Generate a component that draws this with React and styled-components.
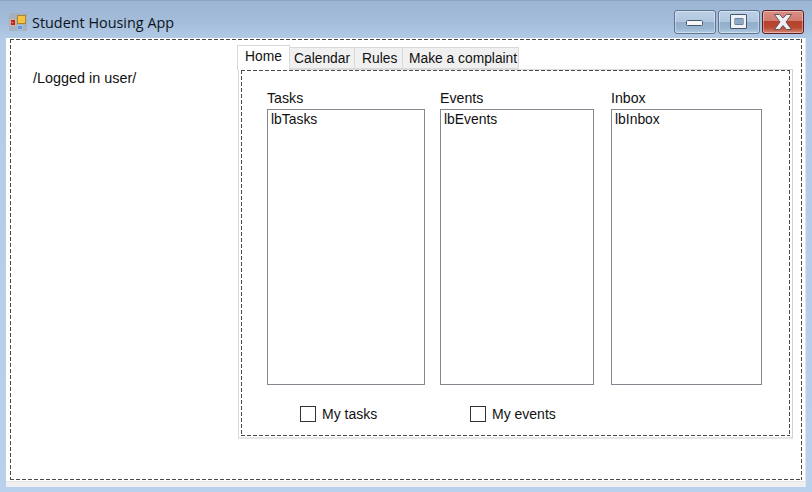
import React from "react";
import styled, { createGlobalStyle, css } from "styled-components";

const Global = createGlobalStyle`
  html, body { margin: 0; padding: 0; }
  body { font-family: "Liberation Sans", Arial, sans-serif; font-size: 14.4px; color: #111; }
  * { box-sizing: border-box; }
`;

const dashed = css`
  background-image:
    linear-gradient(90deg, #4a4a4a 4px, transparent 4px),
    linear-gradient(90deg, #4a4a4a 4px, transparent 4px),
    linear-gradient(180deg, #4a4a4a 4px, transparent 4px),
    linear-gradient(180deg, #4a4a4a 4px, transparent 4px);
  background-size: 6px 1px, 6px 1px, 1px 6px, 1px 6px;
  background-position: 0 0, 0 100%, 0 0, 100% 0;
  background-repeat: repeat-x, repeat-x, repeat-y, repeat-y;
`;

const Win = styled.div`
  width: 812px;
  height: 492px;
  display: flex;
  flex-direction: column;
  overflow: hidden;
  background: linear-gradient(180deg, #9bb5d3 0, #a3bcd9 20px, #b3cbe6 38px, #b9d1ec 100%);
  border-top: 1px solid #8ba4c0;
`;
const TitleBar = styled.header`
  height: 37px;
  flex: none;
  display: flex;
  align-items: flex-start;
  padding: 9px 8px 0 9px;
`;
const AppIcon = styled.svg`
  width: 18px;
  height: 18px;
  margin-top: 3px;
  flex: none;
`;
const Title = styled.h1`
  margin: 3px 0 0 5px;
  font: 400 14.4px/20px "Open Sans", sans-serif;
  color: #0c1420;
  flex: 1;
`;
const WinButtons = styled.div`
  display: flex;
  gap: 2px;
`;
const WinButton = styled.div`
  width: 42px;
  height: 24px;
  border-radius: 3px;
  border: 1px solid ${p => (p.$close ? "#5f1c22" : "#5f7590")};
  box-shadow: inset 0 0 0 1px rgba(255,255,255,.38);
  background: ${p =>
    p.$close
      ? "linear-gradient(180deg,#d98e83 0%,#d17c70 45%,#b5412b 47%,#b84a33 75%,#d58673 100%)"
      : "linear-gradient(180deg,#bcd0e6 0%,#b0c7df 48%,#93aeca 50%,#9ab5d0 80%,#b3cce4 100%)"};
  display: flex;
`;
const Client = styled.main`
  flex: none;
  height: 449px;
  margin: 0 6px;
  border-right: 1px solid #e6e6e6;
  padding: 1px 3px 7px 4px;
  display: flex;
  background: linear-gradient(180deg, #fff 0, #fff 443px, #e4e4e4 443px, #e4e4e4 444px, #f0f0f0 444px);
`;
const Outer = styled.div`
  width: 792px;
  height: 441px;
  padding: 1px;
  ${dashed}
  display: flex;
`;
const UserCol = styled.aside`
  width: 227px;
  flex: none;
  padding: 30px 0 0 22px;
  line-height: 16px;
`;
const TabControl = styled.section`
  width: 555px;
  margin-top: 5px;
  display: flex;
  flex-direction: column;
`;
const TabStrip = styled.nav`
  display: flex;
  align-items: flex-end;
  height: 24px;
  margin-left: -1px;
  position: relative;
  z-index: 1;
`;
const Tab = styled.div`
  height: ${p => (p.$active ? 25 : 22)}px;
  width: ${p => p.$w}px;
  border: 1px solid #d9d9d9;
  border-left-width: ${p => (p.$first ? 1 : 0)}px;
  border-bottom: ${p => (p.$active ? "0" : "1px solid #d9d9d9")};
  background: ${p => (p.$active ? "#fff" : "#f0f0f0")};
  padding: 3px 0 0 ${p => p.$pad}px;
  font-size: 13.8px;
  line-height: 16px;
  white-space: nowrap;
  color: #111;
  ${p => (p.$active ? "margin-bottom:-1px;" : "")}
`;
const Page = styled.div`
  width: 555px;
  height: 370px;
  border: 1px solid #d9d9d9;
  border-right-color: #d0d0d0;
  border-bottom-width: 2px;
  border-bottom-color: #e6e6e6;
  padding: 0 2px 1px;
`;
const PageInner = styled.div`
  width: 549px;
  height: 366px;
  ${dashed}
  padding: 20px 0 0 26px;
  display: flex;
  flex-direction: column;
`;
const Columns = styled.div`
  display: flex;
`;
const Column = styled.div`
  width: ${p => p.$w}px;
  margin-right: ${p => p.$gap}px;
  display: flex;
  flex-direction: column;
`;
const ColLabel = styled.label`
  height: 19px;
  font-size: 14.2px;
  line-height: 16px;
`;
const ListBox = styled.div`
  height: 276px;
  border: 1px solid #828790;
  background: #fff;
  padding: 1px 3px;
  font-size: 13.9px;
  line-height: 16px;
`;
const Checks = styled.div`
  display: flex;
  padding: 21px 0 0 33px;
`;
const Check = styled.label`
  width: 170px;
  display: flex;
  align-items: center;
  gap: 6px;
  height: 16px;
  font-size: 14px;
  line-height: 16px;
`;
const Box = styled.span`
  width: 16px;
  height: 16px;
  border: 1px solid #333;
  background: #fff;
  flex: none;
`;

const Glyph = ({ children }) => (
  <svg width="40" height="22" viewBox="0 0 40 22">{children}</svg>
);

export default function App() {
  return (
    <Win>
      <Global />
      <TitleBar>
        <AppIcon viewBox="0 0 18 18">
          <rect width="18" height="18" fill="#a7aeb6" opacity=".8" />
          <rect x="1.5" y="6.5" width="5" height="6" fill="#b3261c" stroke="#d9b0a8" />
          <circle cx="3.5" cy="9.5" r="1" fill="#ea7060" />
          <rect x="8.5" y="2.5" width="8" height="8" fill="#f5c341" stroke="#a8862c" />
          <rect x="8.5" y="12.5" width="5" height="4" fill="#5f96e0" stroke="#a8bfdf" />
        </AppIcon>
        <Title>Student Housing App</Title>
        <WinButtons>
          <WinButton>
            <Glyph>
              <rect x="11.5" y="9.5" width="16" height="5" rx="1" fill="#f4f6f8" stroke="#46586e" />
            </Glyph>
          </WinButton>
          <WinButton>
            <Glyph>
              <path fillRule="evenodd" d="M12 3.5h15a.5.5 0 0 1 .5.5v13a.5.5 0 0 1-.5.5H12a.5.5 0 0 1-.5-.5V4a.5.5 0 0 1 .5-.5zM16 7.5v6h8v-6z" fill="#eef2f6" stroke="#46586e" />
              <rect x="16" y="7.5" width="8" height="6" fill="#8ea9c6" />
            </Glyph>
          </WinButton>
          <WinButton $close>
            <Glyph>
              <path d="M11.5 3.5h5l3.5 3.6 3.5-3.6h5L23 11l5.5 7.5h-5L20 14.6l-3.5 3.9h-5L17 11z" fill="#eef1f4" stroke="#5a4a50" strokeWidth=".9" />
            </Glyph>
          </WinButton>
        </WinButtons>
      </TitleBar>
      <Client>
        <Outer>
          <UserCol>/Logged in user/</UserCol>
          <TabControl>
            <TabStrip>
              <Tab $active $first $w={53} $pad={7}>Home</Tab>
              <Tab $w={65} $pad={4}>Calendar</Tab>
              <Tab $w={48} $pad={7}>Rules</Tab>
              <Tab $w={116} $pad={6}>Make a complaint</Tab>
            </TabStrip>
            <Page>
              <PageInner>
                <Columns>
                  <Column $w={158} $gap={15}>
                    <ColLabel>Tasks</ColLabel>
                    <ListBox>lbTasks</ListBox>
                  </Column>
                  <Column $w={154} $gap={17}>
                    <ColLabel>Events</ColLabel>
                    <ListBox>lbEvents</ListBox>
                  </Column>
                  <Column $w={151} $gap={0}>
                    <ColLabel>Inbox</ColLabel>
                    <ListBox>lbInbox</ListBox>
                  </Column>
                </Columns>
                <Checks>
                  <Check><Box />My tasks</Check>
                  <Check><Box />My events</Check>
                </Checks>
              </PageInner>
            </Page>
          </TabControl>
        </Outer>
      </Client>
    </Win>
  );
}
